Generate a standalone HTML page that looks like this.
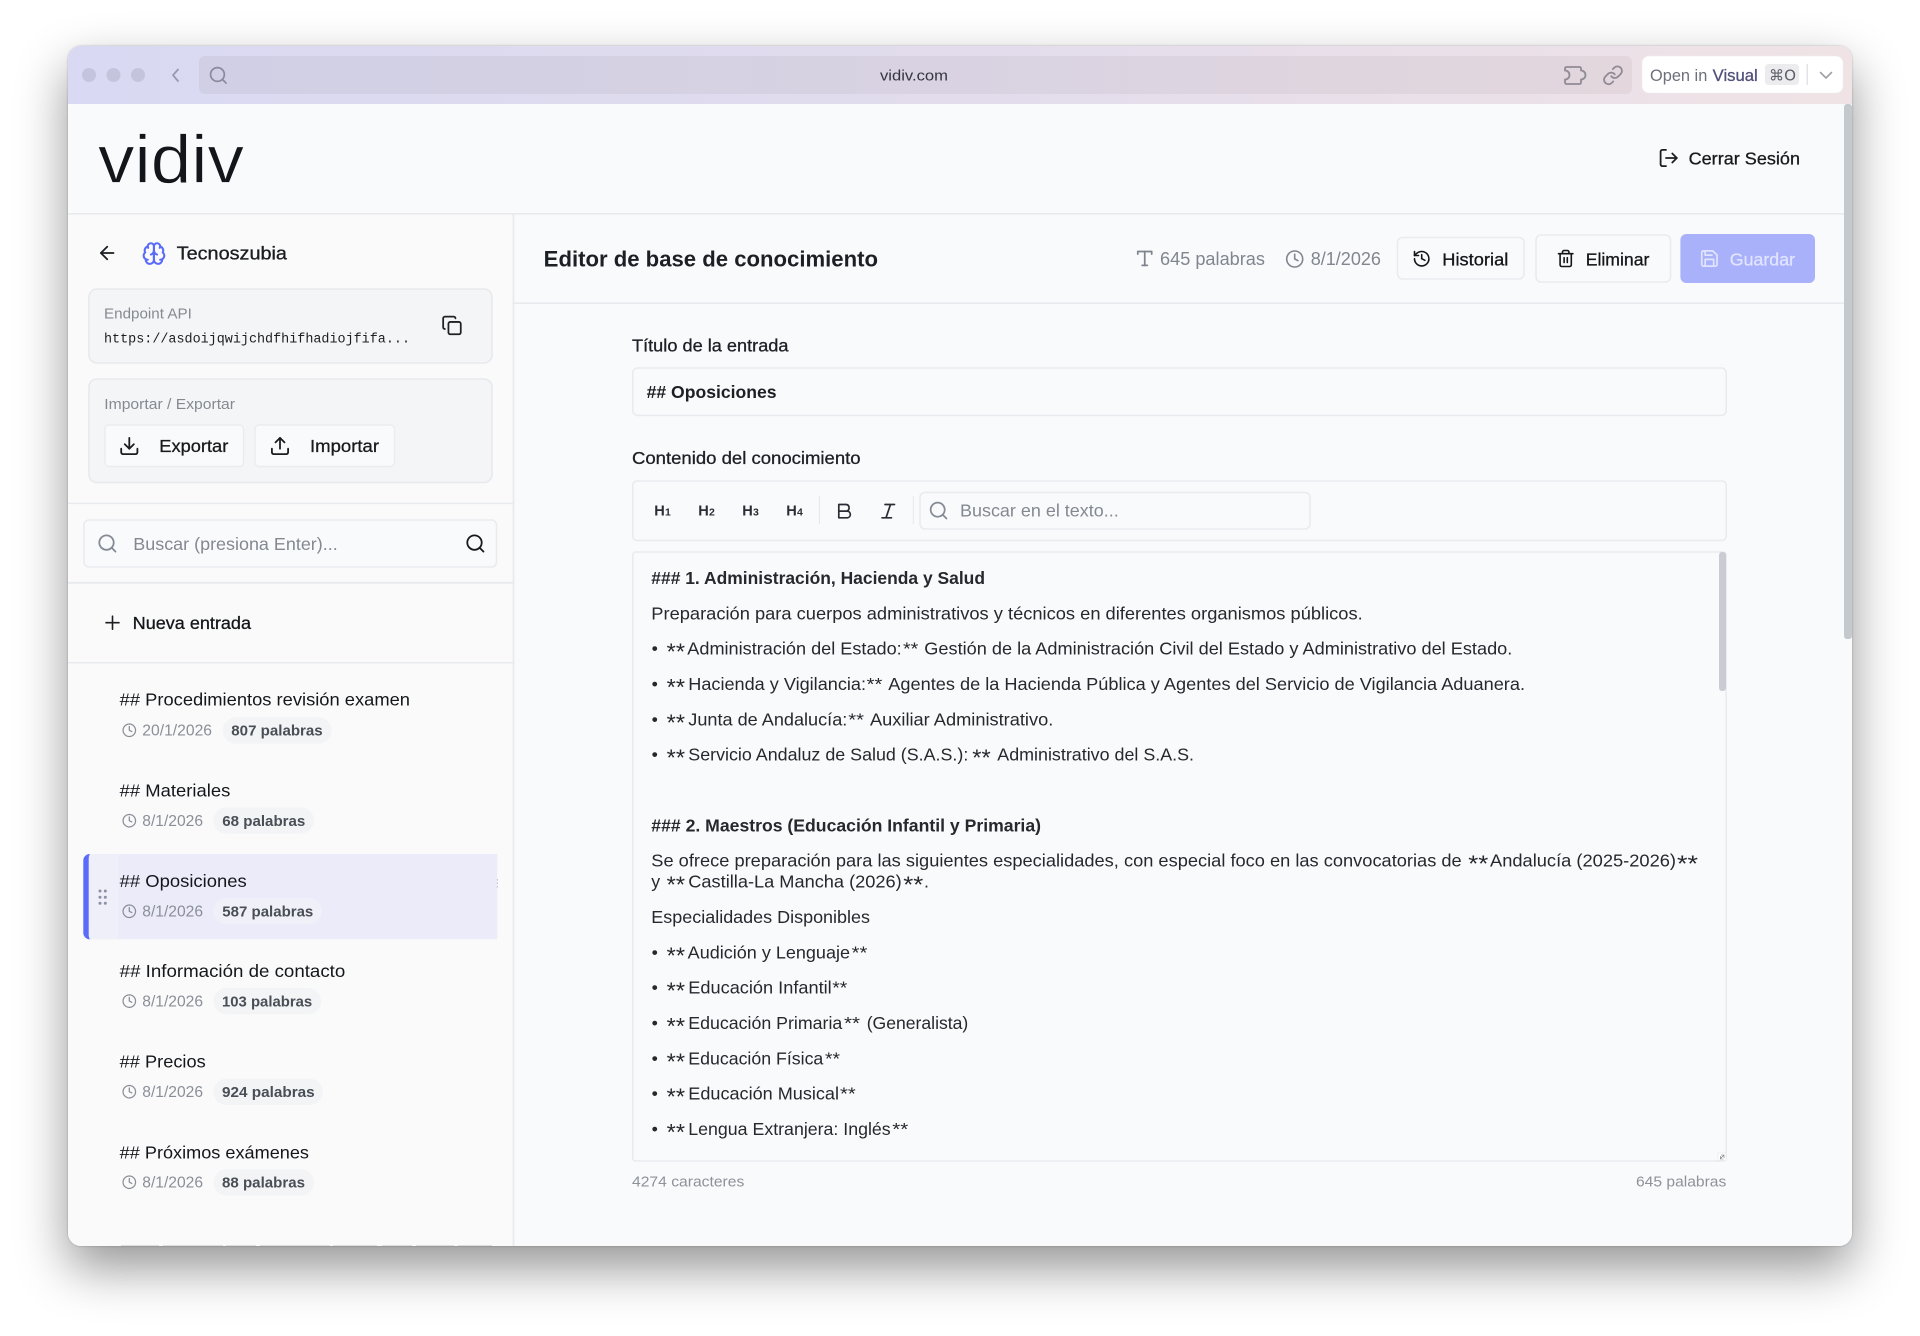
<!DOCTYPE html>
<html lang="es">
<head>
<meta charset="utf-8">
<title>vidiv</title>
<style>
html,body{margin:0;padding:0;background:#fff;width:1920px;height:1336px;overflow:hidden}
#win{position:absolute;left:68px;top:46px;width:1784px;height:1200px;border-radius:13px;background:#f9fafc;box-shadow:0 22px 50px rgba(0,0,0,.42),0 0 2px rgba(0,0,0,.25)}
svg.page{position:absolute;left:0;top:0}
text{font-family:"Liberation Sans",sans-serif;font-size:17.8px;fill:#25282d;white-space:pre}
.m{stroke:currentColor;stroke-width:.3px}
.b{font-weight:700}
.mono{font-family:"Liberation Mono",monospace;font-size:14.2px;fill:#1c1e22}
.lab{font-size:14.6px;fill:#858a91}
.gray{fill:#838891}
.date{font-size:15.6px;fill:#8a8f97}
.pill{font-size:14.8px;font-weight:700;fill:#4a4f57}
.item{font-size:17.8px;fill:#14161a}
.ic{fill:none;stroke-linecap:round;stroke-linejoin:round;stroke-width:2}
.box{fill:#f9fafc;stroke:#e9ebef;stroke-width:1.6}
.hh{font-size:14.6px;font-weight:700;fill:#2a2d33}
.sub{font-size:10.5px;font-weight:700;fill:#2a2d33}
.lo{font-size:23px;transform:translateY(-1.5px)}
</style>
</head>
<body>
<div id="win"></div>
<svg class="page" width="1920" height="1336" viewBox="0 0 1920 1336" xmlns="http://www.w3.org/2000/svg">
<defs>
<linearGradient id="tb" x1="0" x2="1" y1="0" y2="0"><stop offset="0" stop-color="#d9d9f3"/><stop offset=".5" stop-color="#e2dcec"/><stop offset="1" stop-color="#f0e3e6"/></linearGradient>
<linearGradient id="ub" x1="0" x2="1" y1="0" y2="0"><stop offset="0" stop-color="#d0cfe5"/><stop offset=".5" stop-color="#d8d2e2"/><stop offset="1" stop-color="#e3d7dd"/></linearGradient>
<clipPath id="wc"><rect x="68" y="46" width="1784" height="1200" rx="13"/></clipPath>
<g id="search"><circle cx="11" cy="11" r="8"/><path d="m21 21-4.3-4.3"/></g>
<g id="clock"><circle cx="12" cy="12" r="10"/><path d="M12 6v6l4 2"/></g>
<g id="copy"><rect x="8" y="8" width="14" height="14" rx="2"/><path d="M4 16c-1.1 0-2-.9-2-2V4c0-1.1.9-2 2-2h10c1.1 0 2 .9 2 2"/></g>
<g id="download"><path d="M21 15v4a2 2 0 0 1-2 2H5a2 2 0 0 1-2-2v-4"/><path d="M7 10l5 5 5-5"/><path d="M12 15V3"/></g>
<g id="upload"><path d="M21 15v4a2 2 0 0 1-2 2H5a2 2 0 0 1-2-2v-4"/><path d="M17 8l-5-5-5 5"/><path d="M12 3v12"/></g>
<g id="logout"><path d="M9 21H5a2 2 0 0 1-2-2V5a2 2 0 0 1 2-2h4"/><path d="M16 17l5-5-5-5"/><path d="M21 12H9"/></g>
<g id="history"><path d="M3 12a9 9 0 1 0 9-9 9.75 9.75 0 0 0-6.74 2.74L3 8"/><path d="M3 3v5h5"/><path d="M12 7v5l4 2"/></g>
<g id="trash"><path d="M3 6h18"/><path d="M19 6v14c0 1-1 2-2 2H7c-1 0-2-1-2-2V6"/><path d="M8 6V4c0-1 1-2 2-2h4c1 0 2 1 2 2v2"/><path d="M10 11v6"/><path d="M14 11v6"/></g>
<g id="save"><path d="M19 21H5a2 2 0 0 1-2-2V5a2 2 0 0 1 2-2h11l5 5v11a2 2 0 0 1-2 2z"/><path d="M17 21v-8H7v8"/><path d="M7 3v5h8"/></g>
<g id="brain"><path d="M12 5a3 3 0 1 0-5.997.125 4 4 0 0 0-2.526 5.77 4 4 0 0 0 .556 6.588A4 4 0 1 0 12 18Z"/><path d="M12 5a3 3 0 1 1 5.997.125 4 4 0 0 1 2.526 5.77 4 4 0 0 1-.556 6.588A4 4 0 1 1 12 18Z"/><path d="M15 13a4.5 4.5 0 0 1-3-4 4.5 4.5 0 0 1-3 4"/><path d="M12 9v9"/><path d="M17.6 6.5a3 3 0 0 0 .4-1.4"/><path d="M6 5.1A3 3 0 0 0 6.4 6.5"/><path d="M6 18a4 4 0 0 1-2-.5"/><path d="M20 17.5a4 4 0 0 1-2 .5"/></g>
</defs>

<g clip-path="url(#wc)">
<!-- window base -->
<rect x="68" y="46" width="1784" height="1200" fill="#f9fafc"/>
<rect x="68" y="214" width="445" height="1032" fill="#fafafb"/>

<!-- title bar -->
<rect x="68" y="46" width="1784" height="58" fill="url(#tb)"/>
<circle cx="89" cy="75" r="7" fill="#c5c4dd"/><circle cx="113.5" cy="75" r="7" fill="#c5c4dd"/><circle cx="138" cy="75" r="7" fill="#c5c4dd"/>
<path d="M178 69.5 173 75.2 178 81" fill="none" stroke="#9a99ae" stroke-width="1.8" stroke-linecap="round" stroke-linejoin="round"/>
<rect x="199" y="56" width="1433" height="38" rx="6" fill="url(#ub)"/>
<use href="#search" class="ic" stroke="#8b8a9c" transform="translate(208,65) scale(.86)"/>
<text x="880" y="80.400" textLength="68" lengthAdjust="spacingAndGlyphs" style="font-size:15px;fill:#35353f">vidiv.com</text>
<path d="M1565 70.5V68.5a1.5 1.5 0 0 1 1.5-1.5H1579.500a1.500 1.500 0 0 1 1.5 1.5V70.500a4.500 4.500 0 0 1 0 9V82.500a1.500 1.500 0 0 1-1.500 1.500H1566.500a1.500 1.500 0 0 1-1.500-1.500V79.500a4.500 4.500 0 0 0 0-9Z" fill="none" stroke="#8f8a95" stroke-width="1.8" stroke-linejoin="round"/>
<g class="ic" stroke="#8f8a95" transform="translate(1602.2,64.5) scale(.9)"><path d="M10 13a5 5 0 0 0 7.54.54l3-3a5 5 0 0 0-7.07-7.07l-1.72 1.71"/><path d="M14 11a5 5 0 0 0-7.54-.54l-3 3a5 5 0 0 0 7.07 7.07l1.71-1.71"/></g>
<rect x="1642" y="56" width="201" height="37" rx="7" fill="#fff" stroke="#eee" stroke-width=".5"/>
<text x="1650" y="81" textLength="57.3" lengthAdjust="spacingAndGlyphs" style="font-size:16.4px;fill:#6f6f7c">Open in</text>
<text x="1712.7" y="81" textLength="45" lengthAdjust="spacingAndGlyphs" class="m" style="font-size:16.4px;fill:#50507a;color:#50507a">Visual</text>
<rect x="1765" y="64" width="34" height="21" rx="3.5" fill="#ececee"/>
<text x="1769" y="80.6" textLength="27" lengthAdjust="spacingAndGlyphs" style="font-family:'DejaVu Sans','Liberation Sans',sans-serif;font-size:15px;fill:#5f5f6b">⌘O</text>
<rect x="1806.5" y="64" width="1.5" height="21" fill="#e4e4e6"/>
<path d="M1820.5 72.5 1826 78 1831.5 72.5" fill="none" stroke="#a0a0aa" stroke-width="1.6" stroke-linecap="round" stroke-linejoin="round"/>

<!-- header -->
<text x="98" y="182.7" textLength="146" lengthAdjust="spacingAndGlyphs" style="font-size:68px;fill:#12161b;stroke:#f9fafc;stroke-width:.7px">vidiv</text>
<use href="#logout" class="ic" stroke="#1c1e22" transform="translate(1657.9,147.2) scale(.9)"/>
<text x="1688.6" y="164.3" textLength="111.4" lengthAdjust="spacingAndGlyphs" class="m" style="color:#181a1e;fill:#181a1e">Cerrar Sesión</text>
<rect x="68" y="213" width="1776" height="1.6" fill="#e8eaed"/>

<!-- sidebar border + main header -->
<rect x="512.6" y="214" width="1.8" height="1032" fill="#e8eaee"/>
<rect x="514" y="302.4" width="1330" height="1.6" fill="#e8eaed"/>

<!-- sidebar top -->
<g class="ic" stroke="#1b1d21" transform="translate(96.4,242.2) scale(.9)"><path d="m12 19-7-7 7-7"/><path d="M19 12H5"/></g>
<use href="#brain" class="ic" stroke="#5a6bf9" transform="translate(141.6,241.2) scale(1.03)"/>
<text x="176.7" y="259.6" textLength="110.3" lengthAdjust="spacingAndGlyphs" class="m" style="color:#1b1d21;fill:#1b1d21;font-size:18px">Tecnoszubia</text>

<rect x="89" y="289" width="403" height="74" rx="8" fill="#f4f5f7" stroke="#e8e9ed" stroke-width="1.6"/>
<text x="104" y="318.3" textLength="87.8" lengthAdjust="spacingAndGlyphs" class="lab">Endpoint API</text>
<text x="104" y="342.6" textLength="306" lengthAdjust="spacingAndGlyphs" class="mono">https://asdoijqwijchdfhifhadiojfifa...</text>
<use href="#copy" class="ic" stroke="#1f2125" transform="translate(441.4,314.9) scale(.88)"/>

<rect x="89" y="379" width="403" height="103.5" rx="8" fill="#f4f5f7" stroke="#e8e9ed" stroke-width="1.6"/>
<text x="104.3" y="409" textLength="130.7" lengthAdjust="spacingAndGlyphs" class="lab">Importar / Exportar</text>
<rect x="105" y="425" width="138.5" height="41.5" rx="4" fill="#f9fafb" stroke="#ebecef" stroke-width="1.4"/>
<use href="#download" class="ic" stroke="#1b1d21" transform="translate(118.5,435.2) scale(.9)"/>
<text x="159.3" y="452" textLength="69" lengthAdjust="spacingAndGlyphs" class="m" style="color:#181a1e;fill:#181a1e">Exportar</text>
<rect x="255" y="425" width="139.5" height="41.5" rx="4" fill="#f9fafb" stroke="#ebecef" stroke-width="1.4"/>
<use href="#upload" class="ic" stroke="#1b1d21" transform="translate(269.2,435.2) scale(.9)"/>
<text x="310" y="452" textLength="69" lengthAdjust="spacingAndGlyphs" class="m" style="color:#181a1e;fill:#181a1e">Importar</text>
<rect x="68" y="502.6" width="445" height="1.5" fill="#e8eaed"/>

<rect x="84" y="520" width="412.5" height="47" rx="5" class="box"/>
<use href="#search" class="ic" stroke="#858b95" transform="translate(96.6,532.7) scale(.9)"/>
<text x="133.3" y="550" textLength="204.4" lengthAdjust="spacingAndGlyphs" class="gray">Buscar (presiona Enter)...</text>
<use href="#search" class="ic" stroke="#17191d" transform="translate(464.6,532.7) scale(.9)"/>
<rect x="68" y="581.8" width="445" height="2" fill="#e9ebee"/>

<path d="M106 622.7h13M112.500 616.200v13" fill="none" stroke="#1b1d21" stroke-width="1.6" stroke-linecap="round"/>
<text x="132.7" y="629" textLength="118.3" lengthAdjust="spacingAndGlyphs" class="m" style="color:#14161a;fill:#14161a">Nueva entrada</text>
<rect x="68" y="662" width="445" height="1.5" fill="#e8eaed"/>

<!-- list items -->
<text x="119.7" y="705.3" textLength="290.3" lengthAdjust="spacingAndGlyphs" class="item">## Procedimientos revisión examen</text>
<use href="#clock" class="ic" stroke="#8a8f97" transform="translate(121.8,722.8) scale(.625)"/>
<text x="142.3" y="735.7" textLength="69.7" lengthAdjust="spacingAndGlyphs" class="date">20/1/2026</text>
<rect x="222.7" y="717.3" width="109" height="26.4" rx="13.2" fill="#f3f4f6"/>
<text x="231.3" y="735.7" textLength="91.4" lengthAdjust="spacingAndGlyphs" class="pill">807 palabras</text>

<text x="119.7" y="796.3" textLength="110.6" lengthAdjust="spacingAndGlyphs" class="item">## Materiales</text>
<use href="#clock" class="ic" stroke="#8a8f97" transform="translate(121.8,813.2) scale(.625)"/>
<text x="142.3" y="826" textLength="60.7" lengthAdjust="spacingAndGlyphs" class="date">8/1/2026</text>
<rect x="213.3" y="807.3" width="100.7" height="26.4" rx="13.2" fill="#f3f4f6"/>
<text x="222.3" y="826" textLength="83" lengthAdjust="spacingAndGlyphs" class="pill">68 palabras</text>

<!-- active -->
<path d="M90 854H497.3V939.3H90a6.5 6.5 0 0 1-6.7-6.5V860.5a6.5 6.5 0 0 1 6.7-6.5Z" fill="#ebebfa"/>
<rect x="88.6" y="854" width="30" height="85.3" fill="#efeffa"/>
<path d="M90 854a6.5 6.5 0 0 0-6.7 6.5V932.8a6.5 6.5 0 0 0 6.7 6.5c-1 -1-1.3-3-1.3-5V859.5c0-2 .3-4.500 1.300-5.500Z" fill="#5a6bf9"/>
<g fill="#8b90a3"><rect x="98.5" y="889.5" width="3" height="3" rx="1.5"/><rect x="103.8" y="889.5" width="3" height="3" rx="1.5"/><rect x="98.5" y="895.7" width="3" height="3" rx="1.5"/><rect x="103.8" y="895.7" width="3" height="3" rx="1.5"/><rect x="98.5" y="901.7" width="3" height="3" rx="1.5"/><rect x="103.8" y="901.7" width="3" height="3" rx="1.5"/></g>
<g fill="#c8c9d6"><rect x="496.8" y="879" width="1.2" height="1.6"/><rect x="496.8" y="882.5" width="1.2" height="1.6"/><rect x="496.8" y="886" width="1.2" height="1.6"/></g>
<text x="119.7" y="887" textLength="127" lengthAdjust="spacingAndGlyphs" class="item">## Oposiciones</text>
<use href="#clock" class="ic" stroke="#8a8f97" transform="translate(121.8,903.8) scale(.625)"/>
<text x="142.3" y="916.7" textLength="60.7" lengthAdjust="spacingAndGlyphs" class="date">8/1/2026</text>
<rect x="213.3" y="898" width="108.4" height="26.4" rx="13.2" fill="#f0f0f9"/>
<text x="222.3" y="916.7" textLength="91" lengthAdjust="spacingAndGlyphs" class="pill">587 palabras</text>

<text x="119.7" y="977" textLength="225.6" lengthAdjust="spacingAndGlyphs" class="item">## Información de contacto</text>
<use href="#clock" class="ic" stroke="#8a8f97" transform="translate(121.8,993.6) scale(.625)"/>
<text x="142.3" y="1006.7" textLength="60.7" lengthAdjust="spacingAndGlyphs" class="date">8/1/2026</text>
<rect x="213.3" y="988" width="107.7" height="26.4" rx="13.2" fill="#f3f4f6"/>
<text x="222" y="1006.7" textLength="90.2" lengthAdjust="spacingAndGlyphs" class="pill">103 palabras</text>

<text x="119.7" y="1067.5" textLength="86" lengthAdjust="spacingAndGlyphs" class="item">## Precios</text>
<use href="#clock" class="ic" stroke="#8a8f97" transform="translate(121.8,1084.2) scale(.625)"/>
<text x="142.3" y="1097.2" textLength="60.7" lengthAdjust="spacingAndGlyphs" class="date">8/1/2026</text>
<rect x="213.3" y="1078.6" width="109.7" height="26.4" rx="13.2" fill="#f3f4f6"/>
<text x="222" y="1097.2" textLength="92.7" lengthAdjust="spacingAndGlyphs" class="pill">924 palabras</text>

<text x="119.7" y="1158.3" textLength="189.3" lengthAdjust="spacingAndGlyphs" class="item">## Próximos exámenes</text>
<use href="#clock" class="ic" stroke="#8a8f97" transform="translate(121.8,1174.7) scale(.625)"/>
<text x="142.3" y="1187.7" textLength="60.7" lengthAdjust="spacingAndGlyphs" class="date">8/1/2026</text>
<rect x="213.3" y="1169.3" width="100.7" height="26.4" rx="13.2" fill="#f3f4f6"/>
<text x="222" y="1187.7" textLength="83" lengthAdjust="spacingAndGlyphs" class="pill">88 palabras</text>
<path d="M121 1245.400H492" stroke="#cfd1d4" stroke-width=".8" stroke-dasharray="38 4 60 3 30 4 70 3 44 5 30 4"/>

<!-- main header -->
<text x="543.7" y="266.7" textLength="334.3" lengthAdjust="spacingAndGlyphs" class="b" style="font-size:22px;fill:#1c1f24">Editor de base de conocimiento</text>
<g class="ic" stroke="#7e848e" transform="translate(1134.3,248) scale(.87)"><path d="M4 7V4h16v3"/><path d="M9 20h6"/><path d="M12 4v16"/></g>
<text x="1160" y="265" textLength="105" lengthAdjust="spacingAndGlyphs" style="font-size:18px;fill:#81868f">645 palabras</text>
<use href="#clock" class="ic" stroke="#81868f" transform="translate(1285.1,249.4) scale(.8)"/>
<text x="1310.7" y="265" textLength="70.3" lengthAdjust="spacingAndGlyphs" style="font-size:18px;fill:#81868f">8/1/2026</text>

<rect x="1397.5" y="237.5" width="126.5" height="41.5" rx="5" class="box"/>
<use href="#history" class="ic" stroke="#14161a" transform="translate(1412.1,249.1) scale(.8)"/>
<text x="1442.3" y="265.3" textLength="66" lengthAdjust="spacingAndGlyphs" class="m" style="color:#14161a;fill:#14161a">Historial</text>
<rect x="1536" y="235" width="134.5" height="47" rx="5" class="box"/>
<use href="#trash" class="ic" stroke="#14161a" transform="translate(1556.1,248.9) scale(.8)"/>
<text x="1585.7" y="265.3" textLength="63.7" lengthAdjust="spacingAndGlyphs" class="m" style="color:#14161a;fill:#14161a">Eliminar</text>
<rect x="1680.4" y="234" width="134.6" height="49" rx="6" fill="#a9b1fb"/>
<use href="#save" class="ic" stroke="#e1e4ff" transform="translate(1699.2,248.3) scale(.85)"/>
<text x="1729.8" y="265.3" textLength="65.2" lengthAdjust="spacingAndGlyphs" class="m" style="color:#e1e4ff;fill:#e1e4ff">Guardar</text>

<!-- form -->
<text x="632" y="351.7" textLength="156.5" lengthAdjust="spacingAndGlyphs" class="m" style="color:#1c1f24;fill:#1c1f24">Título de la entrada</text>
<rect x="632.8" y="368" width="1093.4" height="47.4" rx="5" class="box"/>
<text x="646.6" y="398" textLength="130" lengthAdjust="spacingAndGlyphs" class="b" style="fill:#1c1f24">## Oposiciones</text>

<text x="632" y="464" textLength="228.6" lengthAdjust="spacingAndGlyphs" class="m" style="color:#1c1f24;fill:#1c1f24">Contenido del conocimiento</text>
<rect x="632.8" y="481" width="1093.4" height="59.4" rx="4" class="box"/>
<text x="654.3" y="515.7" class="hh">H</text><text x="665" y="515.7" class="sub">1</text>
<text x="698.3" y="515.7" class="hh">H</text><text x="709" y="515.7" class="sub">2</text>
<text x="742.3" y="515.7" class="hh">H</text><text x="753" y="515.7" class="sub">3</text>
<text x="786.3" y="515.7" class="hh">H</text><text x="797" y="515.7" class="sub">4</text>
<rect x="818.8" y="496" width="1.2" height="28" fill="#e8eaed"/>
<path d="M838.8 504.500H846.500a3.400 3.400 0 0 1 0 6.600H838.800ZM838.800 511.100H847.500a3.400 3.400 0 0 1 0 6.700H838.800Z" fill="none" stroke="#2a2d33" stroke-width="1.7" stroke-linejoin="round"/>
<path d="M885 504.500h9.500M882 517.800h9.500M890.500 504.500l-4.500 13.300" fill="none" stroke="#2a2d33" stroke-width="1.7" stroke-linecap="round"/>
<rect x="912.8" y="496" width="1.2" height="28" fill="#e8eaed"/>
<rect x="920" y="492.4" width="390" height="36.6" rx="5" class="box"/>
<use href="#search" class="ic" stroke="#858b95" transform="translate(928,500) scale(.88)"/>
<text x="960" y="516.300" textLength="158.7" lengthAdjust="spacingAndGlyphs" class="gray">Buscar en el texto...</text>

<!-- content -->
<rect x="632.8" y="552" width="1093.4" height="609" rx="3" class="box"/>
<rect x="1719" y="552" width="7" height="139" rx="3" fill="#c9cdd3"/>
<rect x="1718" y="1153" width="8" height="7.5" fill="#fff" stroke="#e4e6ea" stroke-width=".6"/>
<path d="M1720 1159l4-4M1720.500 1156v3h3M1724 1158v-3h-3" fill="none" stroke="#70747c" stroke-width=".6"/>

<text x="651.3" y="584" textLength="333.7" lengthAdjust="spacingAndGlyphs" class="b">### 1. Administración, Hacienda y Salud</text>
<text x="651.3" y="619.3" textLength="711.4" lengthAdjust="spacingAndGlyphs">Preparación para cuerpos administrativos y técnicos en diferentes organismos públicos.</text>

<text x="651.6" y="654.7">•</text>
<text x="666.7" y="661.2" textLength="18.3" lengthAdjust="spacingAndGlyphs" class="lo">**</text>
<text x="687.3" y="654.7" textLength="214.4" lengthAdjust="spacingAndGlyphs">Administración del Estado:</text>
<text x="903" y="654.7" textLength="15.3" lengthAdjust="spacingAndGlyphs">**</text>
<text x="924.3" y="654.7" textLength="588" lengthAdjust="spacingAndGlyphs">Gestión de la Administración Civil del Estado y Administrativo del Estado.</text>

<text x="651.6" y="690">•</text>
<text x="666.7" y="696.5" textLength="18.3" lengthAdjust="spacingAndGlyphs" class="lo">**</text>
<text x="688.3" y="690" textLength="177.7" lengthAdjust="spacingAndGlyphs">Hacienda y Vigilancia:</text>
<text x="866.7" y="690" textLength="15.6" lengthAdjust="spacingAndGlyphs">**</text>
<text x="888.3" y="690" textLength="636.7" lengthAdjust="spacingAndGlyphs">Agentes de la Hacienda Pública y Agentes del Servicio de Vigilancia Aduanera.</text>

<text x="651.6" y="725.3">•</text>
<text x="666.7" y="731.8" textLength="18.3" lengthAdjust="spacingAndGlyphs" class="lo">**</text>
<text x="688.3" y="725.3" textLength="159" lengthAdjust="spacingAndGlyphs">Junta de Andalucía:</text>
<text x="848.3" y="725.3" textLength="15.7" lengthAdjust="spacingAndGlyphs">**</text>
<text x="870" y="725.3" textLength="183.3" lengthAdjust="spacingAndGlyphs">Auxiliar Administrativo.</text>

<text x="651.6" y="760.7">•</text>
<text x="666.7" y="767.2" textLength="18.3" lengthAdjust="spacingAndGlyphs" class="lo">**</text>
<text x="688.3" y="760.7" textLength="280" lengthAdjust="spacingAndGlyphs">Servicio Andaluz de Salud (S.A.S.):</text>
<text x="972.3" y="767.2" textLength="18.4" lengthAdjust="spacingAndGlyphs" class="lo">**</text>
<text x="997.3" y="760.7" textLength="196.7" lengthAdjust="spacingAndGlyphs">Administrativo del S.A.S.</text>

<text x="651.3" y="831.7" textLength="389.7" lengthAdjust="spacingAndGlyphs" class="b">### 2. Maestros (Educación Infantil y Primaria)</text>

<text x="651.3" y="866.7" textLength="810.4" lengthAdjust="spacingAndGlyphs">Se ofrece preparación para las siguientes especialidades, con especial foco en las convocatorias de</text>
<text x="1468.3" y="873.2" textLength="20" lengthAdjust="spacingAndGlyphs" class="lo">**</text>
<text x="1490" y="866.7" textLength="186" lengthAdjust="spacingAndGlyphs">Andalucía (2025-2026)</text>
<text x="1677" y="873.2" textLength="21" lengthAdjust="spacingAndGlyphs" class="lo">**</text>

<text x="651.3" y="887.3">y</text>
<text x="666.7" y="893.8" textLength="18.3" lengthAdjust="spacingAndGlyphs" class="lo">**</text>
<text x="688.3" y="887.3" textLength="213.4" lengthAdjust="spacingAndGlyphs">Castilla-La Mancha (2026)</text>
<text x="903.3" y="893.8" textLength="20" lengthAdjust="spacingAndGlyphs" class="lo">**</text>
<text x="924" y="887.3">.</text>

<text x="651.3" y="922.9" textLength="218.7" lengthAdjust="spacingAndGlyphs">Especialidades Disponibles</text>

<text x="651.6" y="958.4">•</text>
<text x="666.7" y="964.9" textLength="18.3" lengthAdjust="spacingAndGlyphs" class="lo">**</text>
<text x="687.7" y="958.4" textLength="162.3" lengthAdjust="spacingAndGlyphs">Audición y Lenguaje</text>
<text x="851.7" y="958.4" textLength="15.6" lengthAdjust="spacingAndGlyphs">**</text>

<text x="651.6" y="993.6">•</text>
<text x="666.7" y="1000.1" textLength="18.3" lengthAdjust="spacingAndGlyphs" class="lo">**</text>
<text x="688.3" y="993.6" textLength="143.4" lengthAdjust="spacingAndGlyphs">Educación Infantil</text>
<text x="832.3" y="993.6" textLength="15" lengthAdjust="spacingAndGlyphs">**</text>

<text x="651.6" y="1029.1">•</text>
<text x="666.7" y="1035.6" textLength="18.3" lengthAdjust="spacingAndGlyphs" class="lo">**</text>
<text x="688.3" y="1029.1" textLength="154" lengthAdjust="spacingAndGlyphs">Educación Primaria</text>
<text x="844" y="1029.1" textLength="16" lengthAdjust="spacingAndGlyphs">**</text>
<text x="866.7" y="1029.1" textLength="101.6" lengthAdjust="spacingAndGlyphs">(Generalista)</text>

<text x="651.6" y="1064.3">•</text>
<text x="666.7" y="1070.8" textLength="18.3" lengthAdjust="spacingAndGlyphs" class="lo">**</text>
<text x="688.3" y="1064.3" textLength="135" lengthAdjust="spacingAndGlyphs">Educación Física</text>
<text x="825" y="1064.3" textLength="15" lengthAdjust="spacingAndGlyphs">**</text>

<text x="651.6" y="1099.7">•</text>
<text x="666.7" y="1106.2" textLength="18.3" lengthAdjust="spacingAndGlyphs" class="lo">**</text>
<text x="688.3" y="1099.7" textLength="150.7" lengthAdjust="spacingAndGlyphs">Educación Musical</text>
<text x="840" y="1099.7" textLength="15.7" lengthAdjust="spacingAndGlyphs">**</text>

<text x="651.6" y="1135.1">•</text>
<text x="666.7" y="1141.6" textLength="18.3" lengthAdjust="spacingAndGlyphs" class="lo">**</text>
<text x="688.3" y="1135.1" textLength="202.4" lengthAdjust="spacingAndGlyphs">Lengua Extranjera: Inglés</text>
<text x="892.3" y="1135.1" textLength="16" lengthAdjust="spacingAndGlyphs">**</text>

<text x="632" y="1186.3" textLength="112.3" lengthAdjust="spacingAndGlyphs" style="font-size:14.8px;fill:#8d9299">4274 caracteres</text>
<text x="1636" y="1186.3" textLength="90.3" lengthAdjust="spacingAndGlyphs" style="font-size:14.8px;fill:#8d9299">645 palabras</text>

<!-- window scrollbar -->
<rect x="1844" y="104" width="8" height="535" rx="3" fill="#c4c9cd"/>
</g>
</svg>
</body>
</html>
